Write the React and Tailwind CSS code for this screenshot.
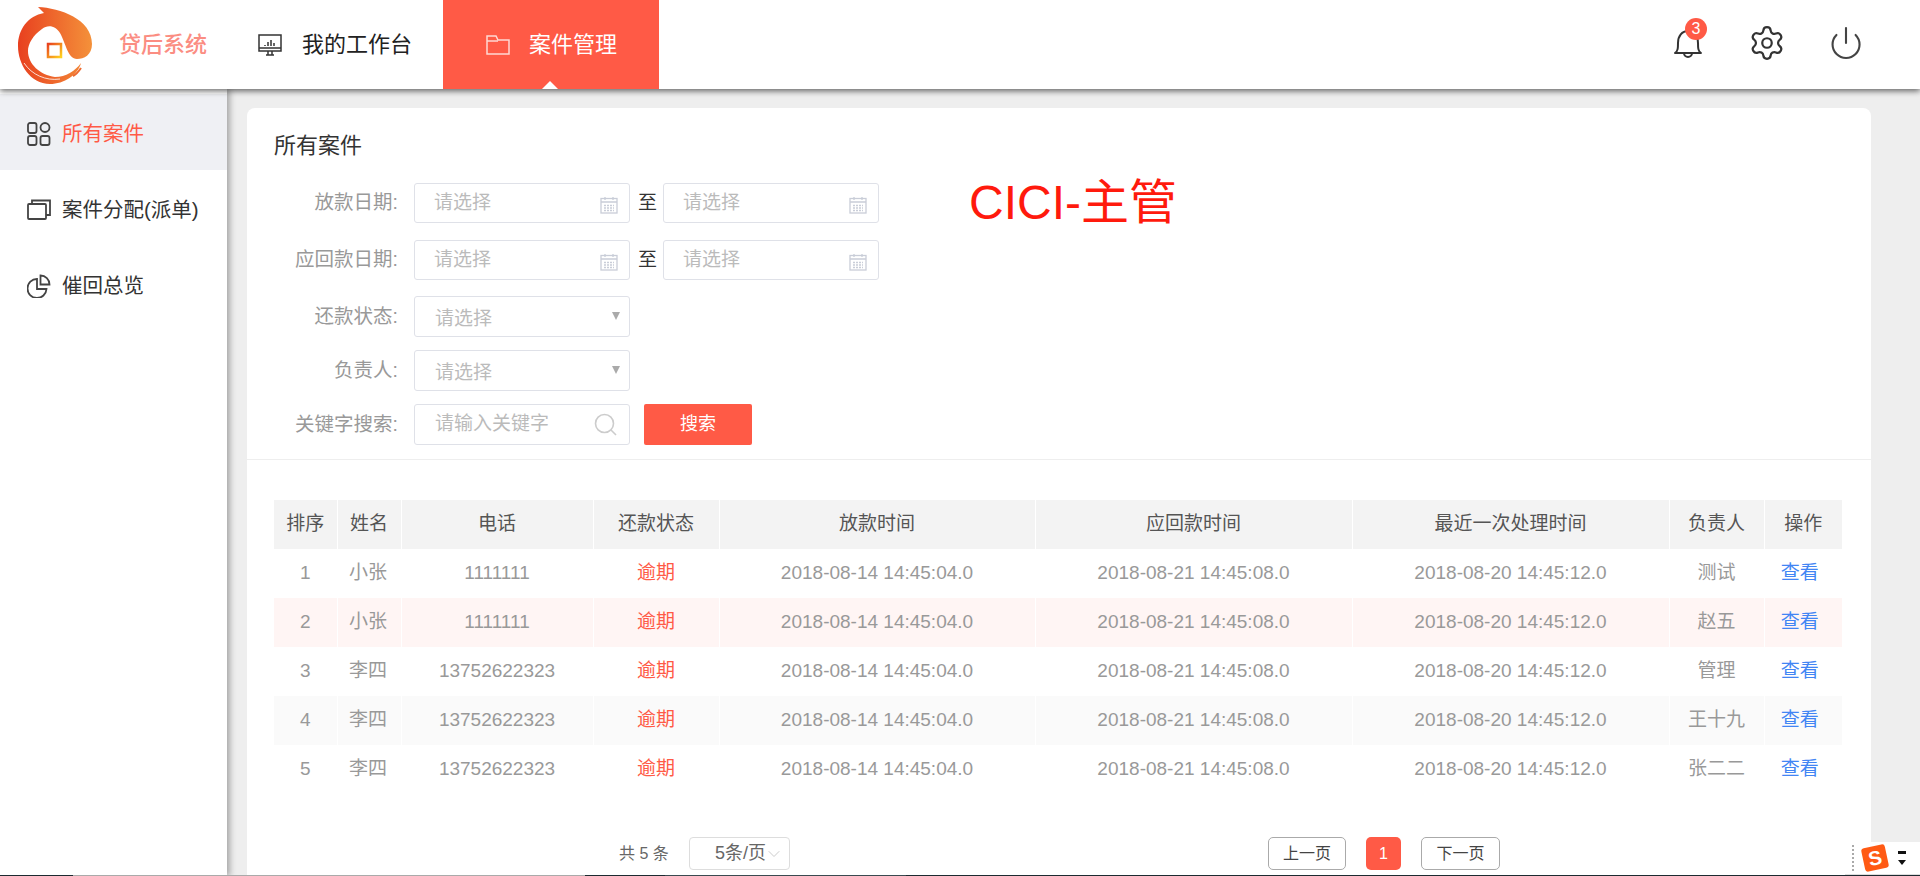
import { Settings, Power, ChevronDown } from 'lucide-react';

const rows = [
  { id: 1, name: '小张', phone: '1111111', owner: '测试', bg: 'bg-white' },
  { id: 2, name: '小张', phone: '1111111', owner: '赵五', bg: 'bg-[#fff5f4]' },
  { id: 3, name: '李四', phone: '13752622323', owner: '管理', bg: 'bg-white' },
  { id: 4, name: '李四', phone: '13752622323', owner: '王十九', bg: 'bg-[#fafafa]' },
  { id: 5, name: '李四', phone: '13752622323', owner: '张二二', bg: 'bg-white' },
];

const headers = ['排序', '姓名', '电话', '还款状态', '放款时间', '应回款时间', '最近一次处理时间', '负责人', '操作'];

const Logo = () => (
  <svg width="76" height="80" viewBox="16 7 76 80" className="mt-[3px] shrink-0">
    <defs>
      <linearGradient id="ring" x1="0" y1="0" x2="1" y2="0">
        <stop offset="0" stopColor="#e8401f" />
        <stop offset="1" stopColor="#f4913a" />
      </linearGradient>
      <linearGradient id="square" x1="0" y1="0" x2="1" y2="1">
        <stop offset="0" stopColor="#e8401f" />
        <stop offset="1" stopColor="#ffd21f" />
      </linearGradient>
    </defs>
    <path
      d="M38 8C60 9 92 20 92 45C92 56 84 60 77 60C68 60 66 45 60 34C56 27 48 25 42 30C33 36 28 45 28 52C28 65 40 76 55 78C66 78 75 72 81 64C78 76 64 85 50 85C30 85 18 65 18 47C18 30 28 17 44 14C42 12 40 10 38 8Z"
      fill="url(#ring)"
    />
    <path d="M24 64C32 76 46 82 60 80" fill="none" stroke="#fff" strokeWidth="1" opacity="0.8" />
    <path d="M73 77C77 75 79 72 81 69" fill="none" stroke="#ee6a30" strokeWidth="2" />
    <rect x="48" y="45" width="13" height="13" fill="none" stroke="url(#square)" strokeWidth="2.5" />
  </svg>
);

const MonitorIcon = () => (
  <svg width="24" height="24" viewBox="0 0 24 24" fill="none" stroke="#333" strokeWidth="1.5" className="shrink-0">
    <rect x="1" y="2" width="22" height="16" />
    <path d="M1 15h22M8 22h8M10 18v4M14 18v4" />
    <path d="M7 12v1M10 9v4M13 7v6M16 10v3" />
  </svg>
);

const FolderIcon = () => (
  <svg width="24" height="24" viewBox="0 0 24 24" fill="none" stroke="#ffd9d3" strokeWidth="1.5" className="shrink-0">
    <path d="M1 21V3h9l2 4h11v14z" />
    <path d="M1 8h11" />
  </svg>
);

const GridIcon = () => (
  <svg width="24" height="24" viewBox="0 0 24 24" fill="none" stroke="#444" strokeWidth="1.8" className="shrink-0">
    <rect x="1" y="1" width="8.5" height="10" rx="2" />
    <circle cx="18" cy="5.5" r="4.5" />
    <rect x="1" y="14" width="8.5" height="9" rx="2" />
    <rect x="13.5" y="14" width="9" height="9" rx="2" />
  </svg>
);

const CardsIcon = () => (
  <svg width="24" height="24" viewBox="0 0 24 24" fill="none" stroke="#444" strokeWidth="1.8" className="shrink-0">
    <rect x="1" y="6" width="18" height="15" rx="1" />
    <path d="M5 6V2.5h18V17h-4" />
  </svg>
);

const PieIcon = () => (
  <svg width="24" height="24" viewBox="0 0 24 24" fill="none" stroke="#444" strokeWidth="1.8" className="shrink-0">
    <path d="M10 5a9.5 9.5 0 1 0 9.5 10H10z" />
    <path d="M13.5 1.5a9 9 0 0 1 9 9h-9z" />
  </svg>
);

const BellIcon = () => (
  <svg width="32" height="34" viewBox="0 0 32 34" fill="none" stroke="#333" strokeWidth="2" strokeLinejoin="round">
    <path d="M3 27c3-2 3-5 3-10 0-7 4-12 10-12s10 5 10 12c0 5 0 8 3 10z" />
    <path d="M12 27a4 4 0 0 0 8 0" />
  </svg>
);

const CalendarIcon = () => (
  <svg width="18" height="18" viewBox="0 0 18 18" fill="none" stroke="#c9cdd8" strokeWidth="1.3" className="absolute right-[11px] top-[12px]">
    <rect x="1" y="2.5" width="16" height="14.5" />
    <path d="M1 6h16M5 1v3M13 1v3" />
    <path d="M4 9.5h10M4 12h10M4 14.5h10" strokeDasharray="2 1" />
  </svg>
);

const DateInput = () => (
  <div className="relative h-[40px] w-[216px] rounded-[3px] border border-[#dfe1e8] pl-[19px] text-[19px] leading-[37px] text-[#bbb]">
    请选择
    <CalendarIcon />
  </div>
);

const SelectInput = () => (
  <div className="relative h-[41px] w-[216px] rounded-[3px] border border-[#dfe1e8] pl-[20px] text-[19px] leading-[43px] text-[#bbb]">
    请选择
    <span className="absolute right-[9px] top-[15px] h-0 w-0 border-x-[4px] border-t-[8px] border-x-transparent border-t-[#aaa]" />
  </div>
);

const FormLabel = ({ children }) => (
  <div className="mr-[16px] w-[151px] text-right text-[19.5px] text-[#999]">{children}</div>
);

const RangeDash = () => <span className="ml-[8px] mr-[6px] w-[19px] text-[19px] text-[#333]">至</span>;

export default function App() {
  return (
    <div className="relative flex h-[876px] w-full flex-col overflow-hidden bg-[#eee] font-['Liberation_Sans','Noto_Sans_CJK_SC',sans-serif]">
      {/* Top bar */}
      <header className="relative z-20 flex h-[89px] shrink-0 items-center bg-white shadow-[0_2px_6px_rgba(0,0,0,0.6)]">
        <div className="ml-[16px] flex items-center">
          <Logo />
          <span className="ml-[27px] text-[22px] font-medium text-[#fb8d82]">贷后系统</span>
        </div>
        <div className="ml-[51px] flex items-center gap-[20px] text-[22px] text-[#222]">
          <MonitorIcon />
          <span>我的工作台</span>
        </div>
        <div className="relative ml-[31px] flex h-full w-[216px] items-center bg-[#ff5a46] pl-[43px] text-[22px] text-white">
          <FolderIcon />
          <span className="ml-[19px]">案件管理</span>
          <span className="absolute bottom-0 left-[99px] h-0 w-0 border-x-[8px] border-b-[8px] border-x-transparent border-b-white" />
        </div>
        <div className="mb-[4px] ml-auto mr-[56px] flex items-center">
          <div className="relative h-[34px] w-[32px]">
            <BellIcon />
            <span className="absolute -top-[8px] left-[13px] flex h-[22px] w-[22px] items-center justify-center rounded-full bg-[#ff5a46] text-[16px] text-white">
              3
            </span>
          </div>
          <Settings size={38} strokeWidth={1.4} color="#333" className="ml-[44px]" />
          <Power size={36} strokeWidth={1.4} color="#444" className="ml-[42px]" />
        </div>
      </header>

      <div className="flex min-h-0 flex-1">
        {/* Sidebar */}
        <aside className="z-10 w-[227px] shrink-0 bg-white pt-[5px] text-[20.5px] text-[#333] shadow-[3px_0_6px_rgba(0,0,0,0.3)]">
          <div className="flex h-[76px] items-center gap-[11px] bg-[#eff0f4] pl-[27px] pt-[4px] text-[#ff5a46]">
            <GridIcon />
            <span>所有案件</span>
          </div>
          <div className="flex h-[76px] items-center gap-[11px] pl-[27px] pt-[4px]">
            <CardsIcon />
            <span>案件分配(派单)</span>
          </div>
          <div className="flex h-[76px] items-center gap-[11px] pl-[27px] pt-[4px]">
            <PieIcon />
            <span>催回总览</span>
          </div>
        </aside>

        {/* Main card */}
        <main className="ml-[20px] mr-[49px] mt-[19px] flex-1 rounded-t-lg bg-white">
          <div className="pl-[27px] pt-[22px] text-[22px] leading-[32px] text-[#333]">所有案件</div>
          <div className="relative mt-[21px]">
            <div className="flex items-center">
              <FormLabel>放款日期:</FormLabel>
              <DateInput />
              <RangeDash />
              <DateInput />
            </div>
            <div className="mt-[17px] flex items-center">
              <FormLabel>应回款日期:</FormLabel>
              <DateInput />
              <RangeDash />
              <DateInput />
            </div>
            <div className="mt-[16px] flex items-center">
              <FormLabel>还款状态:</FormLabel>
              <SelectInput />
            </div>
            <div className="mt-[13px] flex items-center">
              <FormLabel>负责人:</FormLabel>
              <SelectInput />
            </div>
            <div className="mt-[13px] flex items-center">
              <FormLabel>关键字搜索:</FormLabel>
              <div className="relative h-[41px] w-[216px] rounded-[3px] border border-[#dfe1e8] pl-[20px] text-[19px] leading-[37px] text-[#bbb]">
                请输入关键字
                <svg width="24" height="24" viewBox="0 0 24 24" fill="none" stroke="#ccc" strokeWidth="1.6" className="absolute right-[11px] top-[8px]">
                  <circle cx="10.5" cy="10.5" r="9" />
                  <path d="M17 17l5 5" />
                </svg>
              </div>
              <button className="ml-[14px] h-[41px] w-[108px] rounded-[2px] bg-[#ff5a46] text-[18px] text-white">搜索</button>
            </div>
            <span className="absolute left-[722px] top-[-12px] text-[48px] leading-[64px] text-[#ff1a0d]">CICI-主管</span>
          </div>
          <div className="mt-[14px] h-px bg-[#eee]" />

          <div className="pl-[27px] pr-[29px] pt-[40px]">
            <table className="w-full table-fixed border-collapse text-center">
              <colgroup>
                <col className="w-[63px]" />
                <col className="w-[64px]" />
                <col className="w-[192px]" />
                <col className="w-[126px]" />
                <col className="w-[316px]" />
                <col className="w-[317px]" />
                <col className="w-[317px]" />
                <col className="w-[95px]" />
                <col className="w-[78px]" />
              </colgroup>
              <thead>
                <tr className="h-[49px] bg-[#f3f3f3] text-[19px] text-[#555]">
                  {headers.map(h => (
                    <th key={h} className="border-r border-white font-normal last:border-r-0">
                      {h}
                    </th>
                  ))}
                </tr>
              </thead>
              <tbody className="text-[19px] text-[#999]">
                {rows.map(row => (
                  <tr key={row.id} className={`h-[49px] ${row.bg}`}>
                    <td className="border-r border-white">{row.id}</td>
                    <td className="border-r border-white pr-[2px]">{row.name}</td>
                    <td className="border-r border-white">{row.phone}</td>
                    <td className="border-r border-white text-[#ff5a46]">逾期</td>
                    <td className="border-r border-white">2018-08-14 14:45:04.0</td>
                    <td className="border-r border-white">2018-08-21 14:45:08.0</td>
                    <td className="border-r border-white">2018-08-20 14:45:12.0</td>
                    <td className="border-r border-white">{row.owner}</td>
                    <td className="pr-[7px] text-[#4285f4]">查看</td>
                  </tr>
                ))}
              </tbody>
            </table>
          </div>

          {/* Pagination */}
          <div className="mt-[43px] flex h-[33px] items-center pl-[372px] text-[16px] text-[#666]">
            <span className="w-[70px]">共 5 条</span>
            <div className="flex h-[33px] w-[101px] items-center rounded-[4px] border border-[#ddd] pl-[25px] text-[18px]">
              <span>5条/页</span>
              <ChevronDown size={20} strokeWidth={1.2} color="#ccc" className="-ml-[2px]" />
            </div>
            <button className="ml-[478px] h-[33px] w-[78px] rounded-[5px] border border-[#aaa] text-[#444]">上一页</button>
            <button className="ml-[20px] h-[33px] w-[35px] rounded-[5px] bg-[#ff5a46] text-white">1</button>
            <button className="ml-[20px] h-[33px] w-[79px] rounded-[5px] border border-[#aaa] text-[#444]">下一页</button>
          </div>
        </main>
      </div>

      {/* IME toolbar over the page corner */}
      <div className="absolute bottom-px right-0 z-30 flex h-[33px] w-[75px] items-center border-b border-[#ddd] bg-white">
        <span className="ml-[7px] h-[26px] border-l-2 border-dotted border-[#aaa]" />
        <span className="ml-[9px] flex h-[24px] w-[24px] rotate-[-12deg] items-center justify-center rounded-[3px] bg-[#ff5a14] text-[20px] font-bold text-white">
          S
        </span>
        <div className="ml-[11px] flex flex-col items-center gap-[6px]">
          <span className="h-[3px] w-[8px] bg-[#111]" />
          <span className="h-0 w-0 border-x-[4px] border-t-[5px] border-x-transparent border-t-[#111]" />
        </div>
      </div>

      {/* Window edge at the very bottom */}
      <div className="absolute bottom-0 left-0 z-40 flex h-px w-full bg-[#1d2a30]">
        <span className="ml-[73px] w-[512px] bg-[#aaa]" />
        <span className="ml-[80px] w-[241px] bg-[#3a4a50]" />
      </div>
    </div>
  );
}
